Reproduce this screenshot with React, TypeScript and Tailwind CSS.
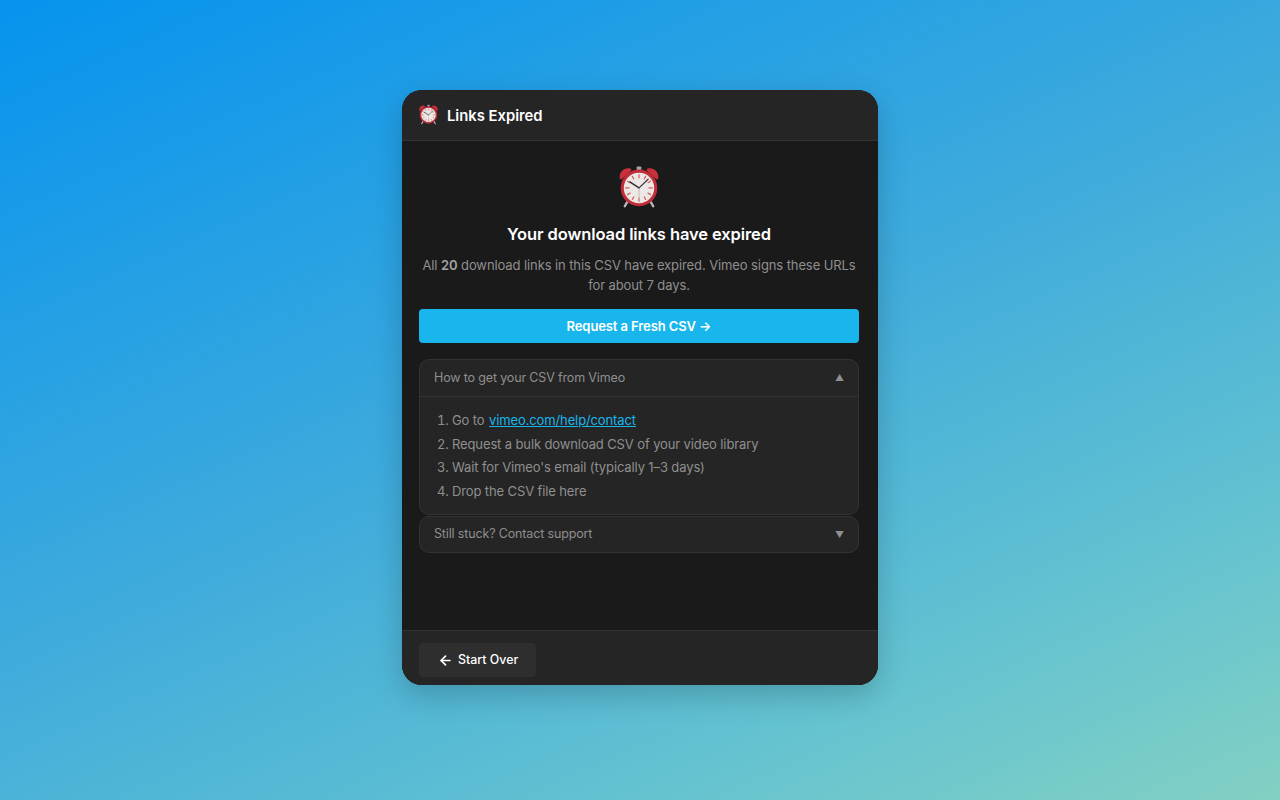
import { ArrowLeft } from "lucide-react";

function AlarmClock({ className }: { className: string }) {
  return (
    <svg viewBox="0 0 48 48" className={className} aria-hidden="true">
      <path d="M12.5 38 L8.5 45" stroke="#b8b8b8" strokeWidth="2.6" strokeLinecap="round" />
      <path d="M35.5 38 L39.5 45" stroke="#b8b8b8" strokeWidth="2.6" strokeLinecap="round" />
      <rect x="21.5" y="1.5" width="5" height="4" rx="1" fill="#a9a9a9" />
      <path d="M3 14 C2 8 8 2 15 4 C16 5 16 6 15 6.5 L5 15.5 C4 16 3.2 15.5 3 14 Z" fill="#c9303c" />
      <path d="M45 14 C46 8 40 2 33 4 C32 5 32 6 33 6.5 L43 15.5 C44 16 44.8 15.5 45 14 Z" fill="#c9303c" />
      <circle cx="24" cy="25" r="20" fill="#bf2d38" />
      <circle cx="24" cy="25" r="16.6" fill="#ece8e5" />
      <g stroke="#dd5a62" strokeWidth="1.3" strokeLinecap="round">
        <path d="M24 10.5 V14" />
        <path d="M24 36 V39.5" />
        <path d="M9.5 25 H13" />
        <path d="M35 25 H38.5" />
        <path d="M16.7 12.4 L18.3 15.2" />
        <path d="M31.3 12.4 L29.7 15.2" />
        <path d="M11.4 17.7 L14.2 19.3" />
        <path d="M36.6 17.7 L33.8 19.3" />
        <path d="M11.4 32.3 L14.2 30.7" />
        <path d="M36.6 32.3 L33.8 30.7" />
        <path d="M16.7 37.6 L18.3 34.8" />
        <path d="M31.3 37.6 L29.7 34.8" />
      </g>
      <path d="M24 25 L14 18.5" stroke="#33333a" strokeWidth="1.7" strokeLinecap="round" />
      <path d="M24 25 L34 15.5" stroke="#33333a" strokeWidth="1.3" strokeLinecap="round" />
      <path d="M24 25 V38" stroke="#c9a9a0" strokeWidth="0.8" />
    </svg>
  );
}

export default function App() {
  return (
    <div
      className="flex h-[800px] justify-center overflow-hidden bg-[linear-gradient(156deg,#0693ee_0%,#3fabdc_48%,#63c2d1_78%,#82d0c3_100%)] pt-[90px] text-white"
      style={{ fontFamily: 'Inter, "Liberation Sans", sans-serif' }}
    >
      <div className="flex h-[595px] w-[476px] flex-col overflow-hidden rounded-[20px] bg-[#1a1a1a] shadow-[0_10px_30px_rgba(0,0,0,0.2)]">
        <header className="flex h-[51px] shrink-0 items-center gap-2 border-b border-[#333333] bg-[#252525] pl-4">
          <AlarmClock className="-mt-[2px] h-[21px] w-[21px]" />
          <h1 className="pt-[1px] text-[14.8px] font-semibold leading-6">Links Expired</h1>
        </header>

        <main className="flex flex-1 flex-col pl-[17px] pr-[19px] pt-6">
          <div className="flex justify-center">
            <AlarmClock className="h-[44px] w-[44px]" />
          </div>
          <h2 className="mt-[12px] text-center text-[16.5px] font-semibold leading-[27px] tracking-[-0.1px]">
            Your download links have expired
          </h2>
          <p className="mt-[7px] text-center text-[13px] leading-5 tracking-[-0.1px] text-[#8f8f8f]">
            All <strong className="font-semibold text-[#a3a3a3]">20</strong> download links in this CSV have
            expired. Vimeo signs these URLs for about 7 days.
          </p>
          <button
            type="button"
            className="mt-[14px] h-[34px] rounded-[4px] bg-[#18b6ec] pt-[1px] text-[13px] font-semibold tracking-[-0.1px] text-white"
          >
            Request a Fresh CSV →
          </button>

          <section className="mt-4 overflow-hidden rounded-[10px] border border-[#333333] bg-[#252525]">
            <div className="flex h-[37px] items-center justify-between border-b border-[#333333] px-[14px] text-[12.5px] tracking-[-0.15px] text-[#8f8f8f]">
              <span>How to get your CSV from Vimeo</span>
              <span className="text-[9px]">▲</span>
            </div>
            <ol className="h-[117px] list-decimal pl-8 pt-[12px] text-[13px] leading-[23.4px] tracking-[-0.12px] text-[#8f8f8f]">
              <li>
                Go to{" "}
                <a href="#" className="ml-[1px] text-[#18b6ec] underline">
                  vimeo.com/help/contact
                </a>
              </li>
              <li className="pt-[0.4px]">Request a bulk download CSV of your video library</li>
              <li>Wait for Vimeo's email (typically 1–3 days)</li>
              <li>Drop the CSV file here</li>
            </ol>
          </section>
          <section className="mt-[1px] flex h-[37px] items-center justify-between rounded-[10px] border border-[#333333] bg-[#252525] px-[14px] text-[12.5px] tracking-[-0.15px] text-[#8f8f8f]">
            <span>Still stuck? Contact support</span>
            <span className="text-[9px]">▼</span>
          </section>
        </main>

        <footer className="flex h-[55px] shrink-0 items-start border-t border-[#333333] bg-[#252525] pl-[17px] pt-3">
          <button
            type="button"
            className="flex h-[34px] w-[117px] items-center gap-[5px] rounded-[4px] bg-[#2e2e2e] pl-[19px] text-[12.4px] font-medium text-white"
          >
            <ArrowLeft size={15} strokeWidth={2.75} />
            Start Over
          </button>
        </footer>
      </div>
    </div>
  );
}
